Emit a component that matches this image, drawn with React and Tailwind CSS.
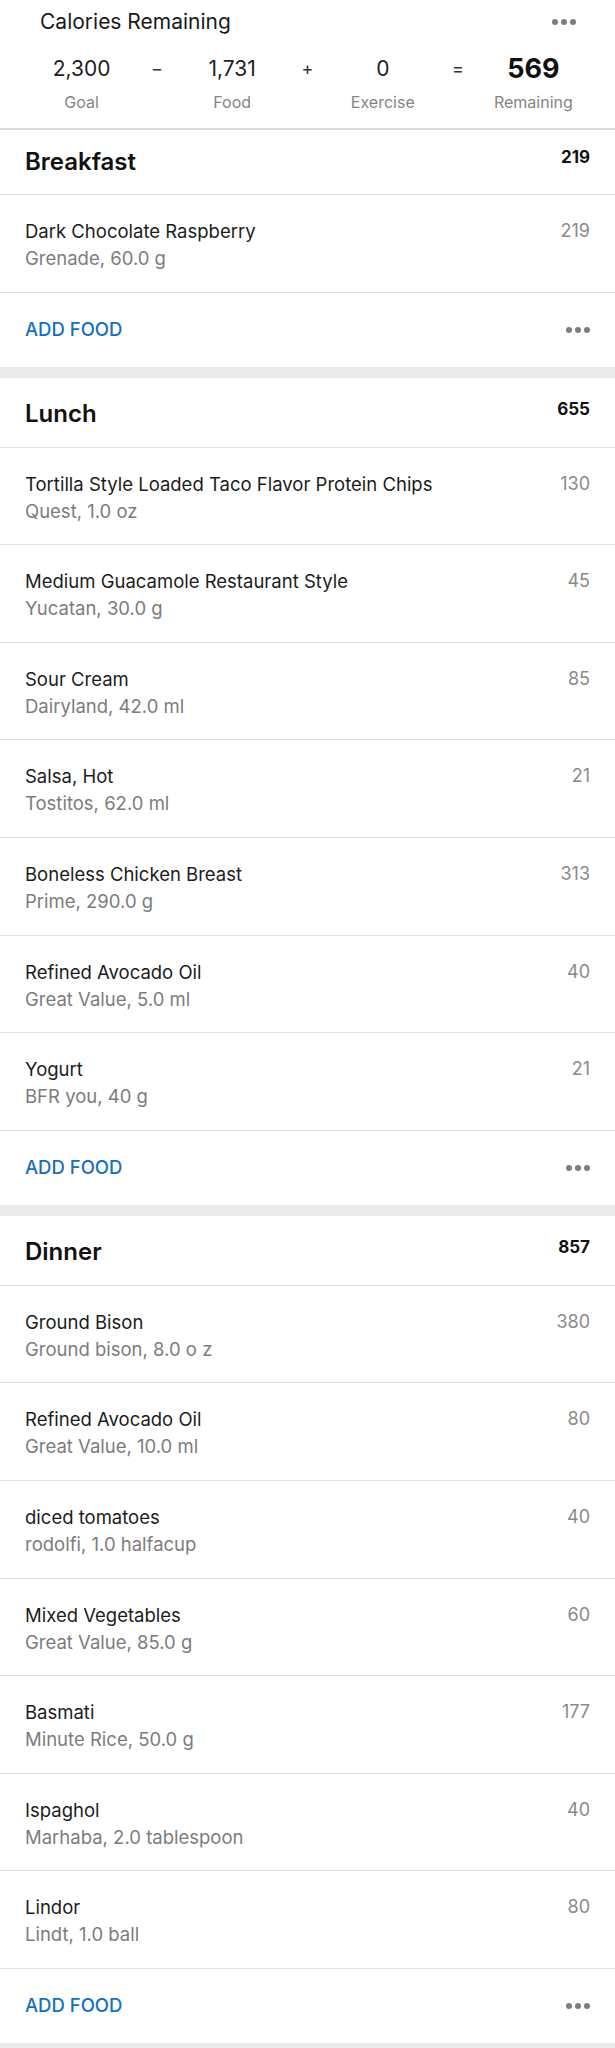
import React from 'react';

const MEALS = [
  {
    name: 'Breakfast',
    total: 219,
    first: true,
    foods: [{ name: 'Dark Chocolate Raspberry', detail: 'Grenade, 60.0 g', cal: 219 }],
  },
  {
    name: 'Lunch',
    total: 655,
    foods: [
      { name: 'Tortilla Style Loaded Taco Flavor Protein Chips', detail: 'Quest, 1.0 oz', cal: 130 },
      { name: 'Medium Guacamole Restaurant Style', detail: 'Yucatan, 30.0 g', cal: 45 },
      { name: 'Sour Cream', detail: 'Dairyland, 42.0 ml', cal: 85 },
      { name: 'Salsa, Hot', detail: 'Tostitos, 62.0 ml', cal: 21 },
      { name: 'Boneless Chicken Breast', detail: 'Prime, 290.0 g', cal: 313 },
      { name: 'Refined Avocado Oil', detail: 'Great Value, 5.0 ml', cal: 40 },
      { name: 'Yogurt', detail: 'BFR you, 40 g', cal: 21 },
    ],
  },
  {
    name: 'Dinner',
    total: 857,
    foods: [
      { name: 'Ground Bison', detail: 'Ground bison, 8.0 o z', cal: 380 },
      { name: 'Refined Avocado Oil', detail: 'Great Value, 10.0 ml', cal: 80 },
      { name: 'diced tomatoes', detail: 'rodolfi, 1.0 halfacup', cal: 40 },
      { name: 'Mixed Vegetables', detail: 'Great Value, 85.0 g', cal: 60 },
      { name: 'Basmati', detail: 'Minute Rice, 50.0 g', cal: 177 },
      { name: 'Ispaghol', detail: 'Marhaba, 2.0 tablespoon', cal: 40 },
      { name: 'Lindor', detail: 'Lindt, 1.0 ball', cal: 80 },
    ],
  },
];

const Dots = () => (
  <div className="flex items-center gap-[3px]">
    <span className="w-[6px] h-[6px] rounded-full bg-[#7d7d7d]" />
    <span className="w-[6px] h-[6px] rounded-full bg-[#7d7d7d]" />
    <span className="w-[6px] h-[6px] rounded-full bg-[#7d7d7d]" />
  </div>
);

const Stat = ({ value, label, bold }) => (
  <div className="flex flex-col items-center">
    <span className={bold ? 'text-[27px] leading-[28px] font-bold text-[#111]' : 'text-[21px] leading-[28px] text-[#222]'}>
      {value}
    </span>
    <span className="mt-[9px] text-[16px] leading-[20px] text-[#858585]">{label}</span>
  </div>
);

const Op = ({ children }) => (
  <div className="flex justify-center">
    <span className="text-[18px] leading-[28px] text-[#333]">{children}</span>
  </div>
);

const App = () => {
  return (
    <div className="w-[615px] bg-white font-['Inter',sans-serif] text-[#1a1a1a]">
      {/* Calories card */}
      <section className="pt-[9px] pb-[16px] border-b-2 border-[#dadada]">
        <div className="flex items-center justify-between pl-[40px] pr-[39px]">
          <h1 className="text-[21px] leading-[26px] text-[#1a1a1a]">Calories Remaining</h1>
          <Dots />
        </div>
        <div className="mt-[20px] grid grid-cols-7 px-[44px]">
          <Stat value="2,300" label="Goal" />
          <Op>−</Op>
          <Stat value="1,731" label="Food" />
          <Op>+</Op>
          <Stat value="0" label="Exercise" />
          <Op>=</Op>
          <Stat value="569" label="Remaining" bold />
        </div>
      </section>

      {MEALS.map((meal) => (
        <section key={meal.name}>
          <div
            className={`flex justify-between border-b border-[#dedede] px-[25px] ${
              meal.first ? 'h-[65px] pt-[17px]' : 'h-[70px] pt-[21px]'
            }`}
          >
            <h2 className="text-[24px] leading-[30px] font-semibold text-[#111]">{meal.name}</h2>
            <span className="text-[17px] leading-[20px] font-bold text-[#111]">{meal.total}</span>
          </div>

          {meal.foods.map((food, i) => (
            <div key={i} className="h-[97.6px] border-b border-[#dedede] px-[25px] pt-[24px] flex justify-between">
              <div>
                <p className="text-[18.5px] leading-[24px] text-[#1c1c1c]">{food.name}</p>
                <p className="mt-[3px] text-[18.5px] leading-[24px] text-[#7c7c7c]">{food.detail}</p>
              </div>
              <span className="text-[18px] leading-[24px] text-[#8a8a8a]">{food.cal}</span>
            </div>
          ))}

          <div className="h-[74px] px-[25px] flex items-center justify-between">
            <button className="text-[18.5px] font-medium text-[#1470c2]">ADD FOOD</button>
            <Dots />
          </div>
          <div className="h-[11px] bg-[#ebebed]" />
        </section>
      ))}
    </div>
  );
};

export default App;
